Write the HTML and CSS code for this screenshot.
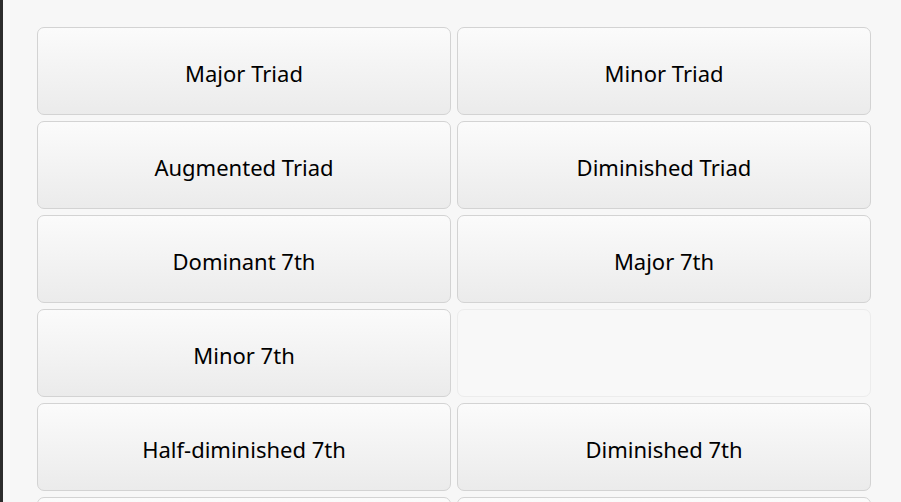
FILE: index.html
```html
<!DOCTYPE html>
<html lang="en">
<head>
<meta charset="utf-8">
<title>Chords</title>
<link rel="stylesheet" href="styles.css">
</head>
<body>
<div class="frame">
  <div class="edge"></div>
  <main class="content">
    <div class="grid">
      <button class="chord">Major Triad</button>
      <button class="chord">Minor Triad</button>
      <button class="chord">Augmented Triad</button>
      <button class="chord">Diminished Triad</button>
      <button class="chord">Dominant 7th</button>
      <button class="chord">Major 7th</button>
      <button class="chord">Minor 7th</button>
      <div class="chord empty"></div>
      <button class="chord">Half-diminished 7th</button>
      <button class="chord">Diminished 7th</button>
      <button class="chord"></button>
      <button class="chord"></button>
    </div>
  </main>
</div>
</body>
</html>
```
FILE: styles.css
```css
html, body {
  margin: 0;
  padding: 0;
  width: 901px;
  height: 502px;
  overflow: hidden;
  background: #f7f7f7;
}
.frame {
  display: flex;
  height: 502px;
}
.edge {
  width: 3px;
  flex: none;
  background: #2c2c2c;
}
.content {
  flex: 1;
  padding: 27px 30px 0 34px;
}
.grid {
  display: grid;
  grid-template-columns: 1fr 1fr;
  grid-auto-rows: 88px;
  column-gap: 6px;
  row-gap: 6px;
}
.chord {
  box-sizing: border-box;
  margin: 0;
  border: 1px solid #d3d3d3;
  border-radius: 7px;
  background: linear-gradient(to bottom, #fbfbfb 0%, #ebebeb 100%);
  font-family: "Noto Sans", "Open Sans", sans-serif;
  font-size: 22px;
  color: #000;
  display: flex;
  align-items: center;
  justify-content: center;
  padding: 3px 0 0 0;
}
.empty {
  border-color: #ececec;
  background: #f8f8f8;
}
```
